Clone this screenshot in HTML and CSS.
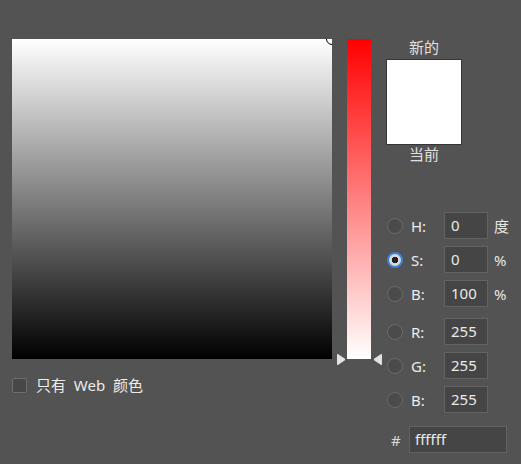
FILE: index.html
```html
<!DOCTYPE html>
<html lang="zh">
<head>
<meta charset="utf-8">
<link rel="stylesheet" href="styles.css">
</head>
<body>
<div class="panel">
  <div class="left">
    <div class="field">
      <span class="marker"></span>
    </div>
    <label class="web">
      <span class="checkbox"></span>
      <span class="web-text">只有&nbsp; Web&nbsp; 颜色</span>
    </label>
  </div>
  <div class="hue">
    <div class="hue-bar"></div>
    <svg class="arrow arrow-left" width="10" height="13" viewBox="0 0 10 13"><path d="M1 2 Q1 0.6 2.3 1.3 L8.6 5.5 Q9.8 6.5 8.6 7.5 L2.3 11.7 Q1 12.4 1 11 Z" fill="#e2e2e2"/></svg>
    <svg class="arrow arrow-right" width="10" height="13" viewBox="0 0 10 13"><path d="M9 2 Q9 0.6 7.7 1.3 L1.4 5.5 Q0.2 6.5 1.4 7.5 L7.7 11.7 Q9 12.4 9 11 Z" fill="#e2e2e2"/></svg>
  </div>
  <div class="right">
    <div class="swatch-label">新的</div>
    <div class="swatch"></div>
    <div class="swatch-label current">当前</div>
    <div class="rows">
      <div class="row"><span class="radio"></span><span class="lbl">H:</span><span class="inp">0</span><span class="unit">度</span></div>
      <div class="row"><span class="radio on"></span><span class="lbl">S:</span><span class="inp">0</span><span class="unit">%</span></div>
      <div class="row"><span class="radio"></span><span class="lbl">B:</span><span class="inp">100</span><span class="unit">%</span></div>
      <div class="row gap-top"><span class="radio"></span><span class="lbl">R:</span><span class="inp">255</span><span class="unit"></span></div>
      <div class="row"><span class="radio"></span><span class="lbl">G:</span><span class="inp">255</span><span class="unit"></span></div>
      <div class="row"><span class="radio"></span><span class="lbl">B:</span><span class="inp">255</span><span class="unit"></span></div>
      <div class="hex-row"><span class="hash">#</span><span class="hex">ffffff</span></div>
    </div>
  </div>
</div>
</body>
</html>
```
FILE: styles.css
```css
html, body {
  margin: 0;
  padding: 0;
}
body {
  width: 521px;
  height: 464px;
  background: #535353;
  font-family: "Noto Sans", "Noto Sans CJK SC", sans-serif;
  font-size: 15px;
  color: #e6e6e6;
  overflow: hidden;
}
.panel {
  display: flex;
  padding: 39px 0 0 12px;
}
.left {
  display: flex;
  flex-direction: column;
}
.field {
  position: relative;
  width: 320px;
  height: 320px;
  background: linear-gradient(to bottom, #ffffff, #000000);
  overflow: hidden;
}
.marker {
  position: absolute;
  left: 314px;
  top: -6px;
  width: 10px;
  height: 10px;
  border: 1px solid #000;
  border-radius: 50%;
  box-shadow: 0 0 0 1px #fff;
}
.web {
  display: flex;
  align-items: center;
  margin-top: 18px;
  height: 16px;
}
.checkbox {
  box-sizing: border-box;
  width: 15px;
  height: 15px;
  border: 1px solid #6e6e6e;
  border-radius: 2px;
  background: #474747;
}
.web-text {
  margin-left: 9px;
  line-height: 16px;
  color: #ececec;
}
.hue {
  position: relative;
  margin-left: 15px;
  width: 24px;
  height: 320px;
}
.hue-bar {
  width: 24px;
  height: 320px;
  background: linear-gradient(to bottom, #ff0000, #ffffff);
}
.arrow {
  position: absolute;
  top: 314px;
}
.arrow-left {
  left: -11px;
}
.arrow-right {
  left: 26px;
}
.right {
  margin-left: 15px;
  display: flex;
  flex-direction: column;
  width: 135px;
}
.swatch-label {
  width: 76px;
  text-align: center;
  line-height: 16px;
  color: #e0e0e0;
}
.swatch {
  box-sizing: border-box;
  width: 76px;
  height: 86px;
  margin-top: 4px;
  background: #ffffff;
  border: 1px solid #363636;
}
.swatch-label.current {
  margin-top: 1px;
}
.rows {
  margin-top: 50px;
  display: flex;
  flex-direction: column;
  gap: 7px;
}
.row {
  display: flex;
  align-items: center;
  height: 27px;
}
.row.gap-top {
  margin-top: 4px;
}
.radio {
  box-sizing: border-box;
  width: 16px;
  height: 16px;
  margin-left: 1px;
  border: 1px solid #6a6a6a;
  border-radius: 50%;
  background: #4b4b4b;
}
.radio.on {
  border: 2px solid #3d82d8;
  background: radial-gradient(circle, #222 0 3px, #d8d8d8 3.5px);
}
.lbl {
  width: 33px;
  margin-left: 8px;
  color: #ececec;
}
.inp {
  box-sizing: border-box;
  width: 44px;
  height: 27px;
  padding-left: 6px;
  line-height: 25px;
  background: #454545;
  border: 1px solid #626262;
  color: #eaeaea;
}
.unit {
  margin-left: 6px;
  color: #e6e6e6;
}
.hex-row {
  display: flex;
  align-items: center;
  height: 27px;
  margin-top: 6px;
}
.hash {
  margin-left: 5px;
  width: 18px;
  color: #d8d8d8;
}
.hex {
  box-sizing: border-box;
  width: 98px;
  height: 27px;
  padding-left: 5px;
  line-height: 25px;
  background: #454545;
  border: 1px solid #626262;
  color: #eaeaea;
}
```
